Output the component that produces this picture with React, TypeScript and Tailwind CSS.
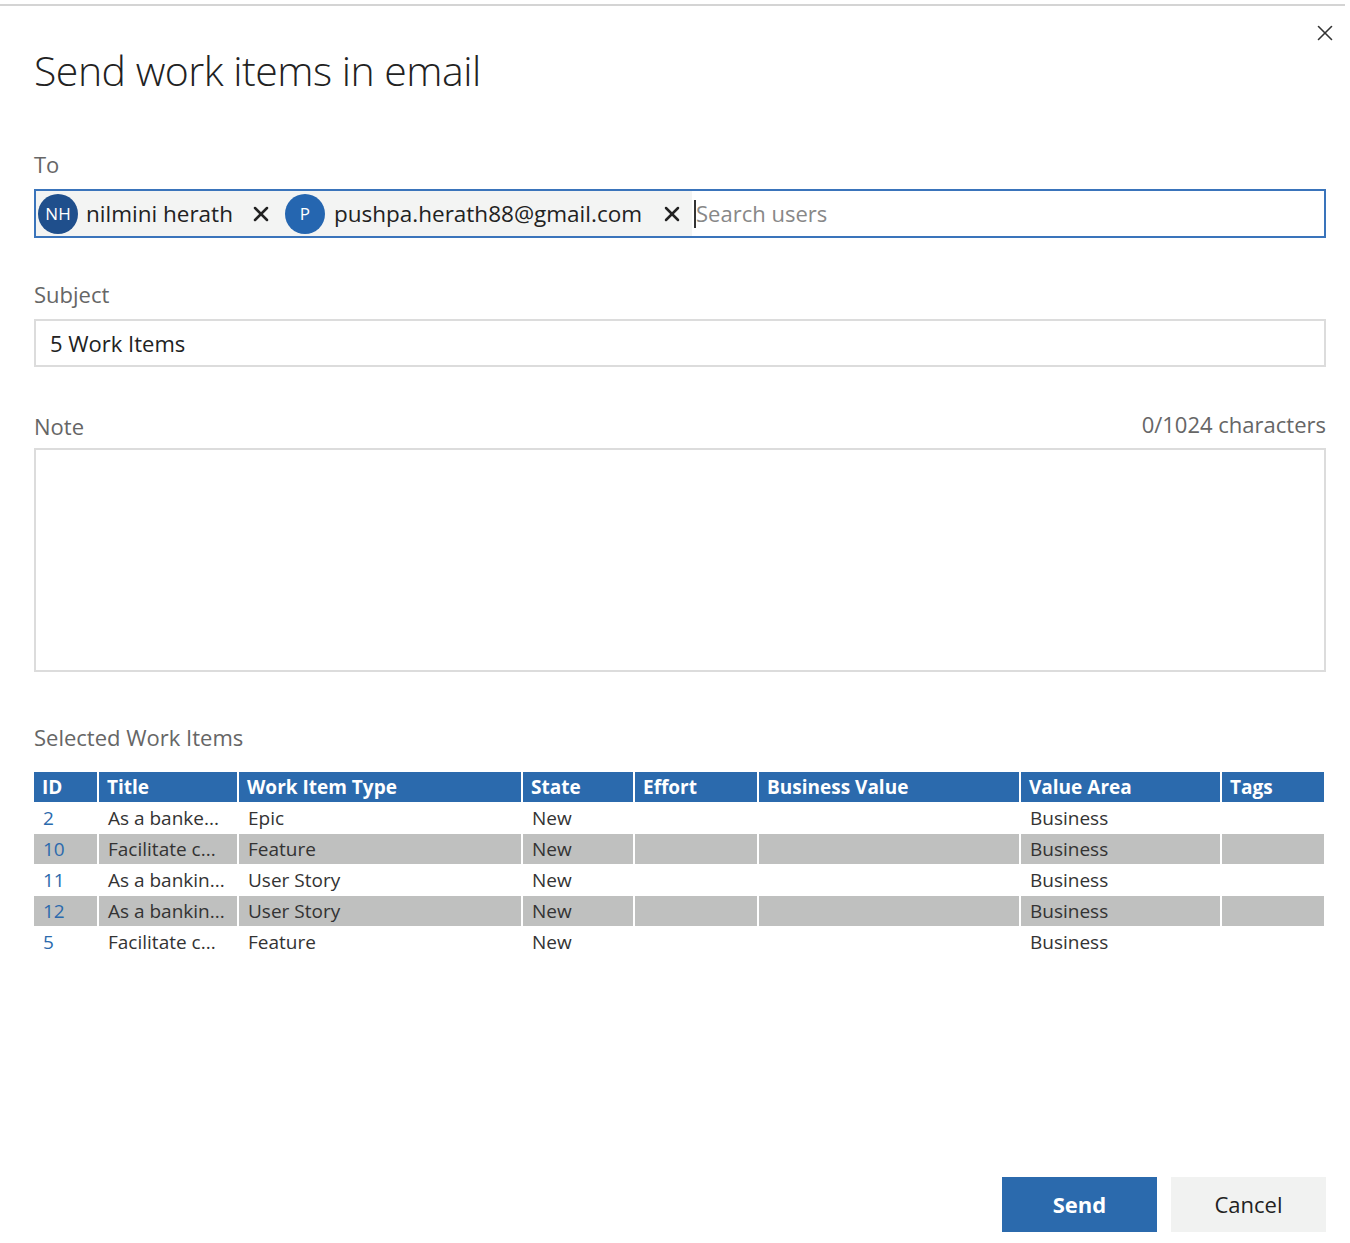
import { X } from "lucide-react";

const rows = [
  { id: "2", title: "As a banke...", type: "Epic", state: "New", area: "Business" },
  { id: "10", title: "Facilitate c...", type: "Feature", state: "New", area: "Business" },
  { id: "11", title: "As a bankin...", type: "User Story", state: "New", area: "Business" },
  { id: "12", title: "As a bankin...", type: "User Story", state: "New", area: "Business" },
  { id: "5", title: "Facilitate c...", type: "Feature", state: "New", area: "Business" },
];

const cols = ["ID", "Title", "Work Item Type", "State", "Effort", "Business Value", "Value Area", "Tags"];
const grid = "grid grid-cols-[63px_138px_282px_110px_122px_260px_199px_102px] gap-x-[2px]";

export default function App() {
  return (
    <div className="w-[1350px] h-[1243px] bg-white text-[#333] font-['Open_Sans',sans-serif] flex flex-col">
      {/* Top cut-off edge */}
      <div className="h-[4px]" />
      <div className="h-[2px] bg-[#d4d4d4] mr-[5px]" />

      <div className="flex justify-between pl-[34px] pr-[12px]">
        <h1 className="mt-[34px] text-[41px] leading-[60px] font-light text-[#222] tracking-[-0.5px]">
          Send work items in email
        </h1>
        <X className="mt-[14px] w-[26px] h-[26px] text-[#333]" strokeWidth={1.5} />
      </div>

      <div className="px-[34px] pr-[24px] flex flex-col">
        {/* To */}
        <div className="mt-[49px] text-[22px] leading-[30px] text-[#666]">To</div>
        <div className="mt-[10px] h-[49px] border-2 border-[#3a74bb] flex items-center">
          <div className="h-full bg-[#f3f4f3] flex items-center pl-[2px] pr-[8px]">
            <div className="w-[40px] h-[40px] rounded-full bg-[#1f4f8c] text-white text-[17px] flex items-center justify-center">
              NH
            </div>
            <span className="ml-[8px] text-[22.5px] text-[#222]">nilmini herath</span>
            <X className="ml-[16px] w-[24px] h-[24px] text-[#222]" strokeWidth={2.5} />
            <div className="ml-[12px] w-[40px] h-[40px] rounded-full bg-[#2566b0] text-white text-[17px] flex items-center justify-center">
              P
            </div>
            <span className="ml-[9px] text-[22.5px] text-[#222]">pushpa.herath88@gmail.com</span>
            <X className="ml-[18px] w-[24px] h-[24px] text-[#222]" strokeWidth={2.5} />
          </div>
          <div className="ml-[2px] w-[2px] h-[28px] bg-[#333]" />
          <span className="text-[22px] text-[#888]">Search users</span>
        </div>

        {/* Subject */}
        <div className="mt-[41px] text-[22px] leading-[30px] text-[#666]">Subject</div>
        <div className="mt-[10px] h-[48px] border-2 border-[#dcdcdc] flex items-center pl-[14px] text-[22px] text-[#222]">
          5 Work Items
        </div>

        {/* Note */}
        <div className="mt-[44px] flex justify-between items-end text-[22px] leading-[30px] text-[#666]">
          <span>Note</span>
          <span className="-translate-y-[2px]">0/1024 characters</span>
        </div>
        <div className="mt-[7px] h-[224px] border-2 border-[#dcdcdc]" />

        {/* Selected work items */}
        <div className="mt-[50px] text-[22px] leading-[30px] text-[#666]">Selected Work Items</div>
        <div className="mt-[20px] w-[1290px]">
          <div className={`${grid} h-[30px]`}>
            {cols.map((c) => (
              <div key={c} className="bg-[#2b6aad] text-white font-bold text-[19px] leading-[30px] px-[8px] whitespace-nowrap">
                {c}
              </div>
            ))}
          </div>
          {rows.map((r, i) => {
            const bg = i % 2 === 1 ? "bg-[#bfc0bf]" : "bg-white";
            const cell = `${bg} text-[19px] leading-[30px] px-[9px] whitespace-nowrap`;
            return (
              <div key={r.id} className={`${grid} h-[31px] pt-[1px]`}>
                <div className={`${cell} text-[#2b6aad]`}>{r.id}</div>
                <div className={cell}>{r.title}</div>
                <div className={cell}>{r.type}</div>
                <div className={cell}>{r.state}</div>
                <div className={cell} />
                <div className={cell} />
                <div className={cell}>{r.area}</div>
                <div className={cell} />
              </div>
            );
          })}
        </div>
      </div>

      <div className="flex-1" />
      <div className="flex justify-end gap-[14px] pr-[24px] mb-[11px]">
        <button className="w-[155px] h-[55px] bg-[#2b6aad] text-white font-bold text-[22px]">Send</button>
        <button className="w-[155px] h-[55px] bg-[#f1f2f1] text-[#222] text-[22px]">Cancel</button>
      </div>
    </div>
  );
}
